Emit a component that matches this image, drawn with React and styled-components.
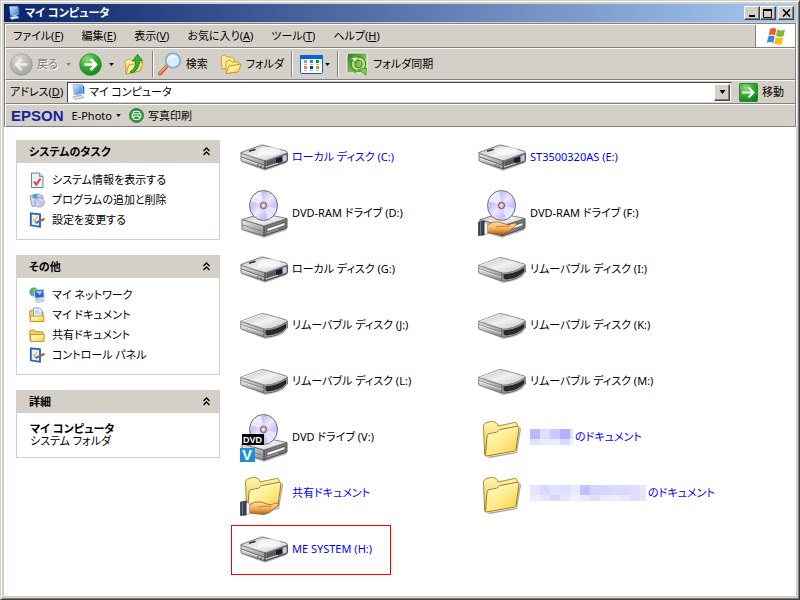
import React from "react";
import styled, { createGlobalStyle } from "styled-components";

const GlobalStyle = createGlobalStyle`
  * {
    box-sizing: border-box;
  }
  body {
    margin: 0;
    background: #fff;
    color: #000;
    font-family: "Noto Sans", "Noto Sans CJK JP", sans-serif;
    font-feature-settings: "palt";
    font-size: 11px;
    line-height: 16px;
  }
  button, input {
    font: inherit;
    font-feature-settings: inherit;
    color: inherit;
  }
  a {
    color: inherit;
    text-decoration: none;
  }
  svg {
    display: block;
    flex: none;
  }
`

const Window = styled.div`
  display: flex;
  flex-direction: column;
  min-height: 100vh;
  padding: 3px;
  background: #d4d0c8;
  border: 1px solid;
  border-color: #d4d0c8 #404040 #404040 #d4d0c8;
  box-shadow: inset 1px 1px 0 #fff, inset -1px -1px 0 #808080;
`

const TitleBar = styled.header`
  display: flex;
  align-items: center;
  gap: 4px;
  height: 18px;
  padding: 0 2px 0 3px;
  background: linear-gradient(90deg, #0a246a, #a6caf0);
`

const Title = styled.h1`
  flex: 1;
  margin: 0;
  color: #fff;
  font-size: 11px;
  font-weight: bold;
  line-height: 18px;
`

const Captions = styled.div`
  display: flex;
  button:last-child {
    margin-left: 2px;
  }
`

const CaptionButton = styled.button`
  display: grid;
  place-items: center;
  width: 16px;
  height: 14px;
  padding: 0;
  background: #d4d0c8;
  border: 1px solid;
  border-color: #fff #404040 #404040 #fff;
  box-shadow: inset -1px -1px 0 #808080;
`

const Bars = styled.div`
  margin-top: 1px;
  border: 1px solid #808080;
  border-bottom: 0;
  box-shadow: 1px 0 0 #fff;
`

const Bar = styled.div`
  display: flex;
  align-items: center;
  height: ${props => props.$height};
  border-top: 1px solid #fff;
  border-left: 1px solid #fff;
  border-bottom: 1px solid #808080;
  white-space: nowrap;
`

const MenuItems = styled.nav`
  display: flex;
  flex: 1;
  gap: 18px;
  padding-left: 7px;
`

const MenuButton = styled.button`
  padding: 0;
  background: none;
  border: 0;
`

const Brand = styled.div`
  display: grid;
  place-items: center;
  align-self: stretch;
  width: 40px;
  background: #fff;
  border-left: 1px solid #808080;
`

const ToolButton = styled.button`
  display: flex;
  align-items: center;
  gap: 4px;
  padding: 0;
  margin-left: ${props => props.$space || "4px"};
  background: none;
  border: 0;
  color: #000;
  &:disabled {
    color: #808080;
    text-shadow: 1px 1px 0 #fff;
  }
`

const Separator = styled.div`
  width: 2px;
  height: 26px;
  margin-left: 7px;
  background: #808080;
  border-right: 1px solid #fff;
`

const AddressLabel = styled.label`
  width: 61px;
  padding-left: 4px;
`

const AddressBox = styled.div`
  display: flex;
  align-items: center;
  flex: 1;
  height: 21px;
  padding: 1px 1px 1px 2px;
  background: #fff;
  border: 1px solid;
  border-color: #404040 #d4d0c8 #d4d0c8 #404040;
`

const AddressInput = styled.input`
  flex: 1;
  min-width: 0;
  height: 16px;
  margin-left: 3px;
  padding: 0;
  background: none;
  border: 0;
  outline: 0;
`

const DropButton = styled(CaptionButton)`
  height: 17px;
`

const GoButton = styled(ToolButton)`
  padding-right: 11px;
`

const Epson = styled.span`
  padding-left: 5px;
  color: #10279b;
  font-family: "Liberation Sans", sans-serif;
  font-size: 15px;
  font-weight: bold;
`

const Content = styled.div`
  display: flex;
  flex: 1;
  align-items: flex-start;
  gap: 20px;
  padding-left: 12px;
  background: #fff;
`

const Sidebar = styled.aside`
  display: flex;
  flex: none;
  flex-direction: column;
  gap: 15px;
  width: 204px;
  padding-top: 13px;
`

const PanelHeader = styled.button`
  display: flex;
  align-items: center;
  justify-content: space-between;
  width: 100%;
  height: 23px;
  padding: 0 10px 0 13px;
  background: #d4d0c8;
  border: 0;
  font-weight: bold;
`

const PanelBody = styled.div`
  padding: ${props => props.$padding || "7px 12px 9px"};
  border: 1px solid #d4d0c8;
  border-top: 0;
  line-height: 12px;
`

const TaskLink = styled.a`
  display: flex;
  align-items: center;
  gap: 7px;
  height: 20px;
`

const Detail = styled.div`
  font-weight: ${props => (props.$bold ? "bold" : "normal")};
`

const Tiles = styled.main`
  display: grid;
  flex: 1;
  grid-template-columns: repeat(auto-fill, 238px);
  padding-top: 2px;
`

const Tile = styled.a`
  position: relative;
  display: flex;
  align-items: center;
  gap: 4px;
  height: 56px;
  color: ${props => (props.$blue ? "#0000ff" : "#000")};
  white-space: nowrap;
`

const TileName = styled.span`
  display: flex;
  align-items: center;
  gap: 2px;
`

const Marker = styled.span`
  position: absolute;
  top: 4px;
  left: -9px;
  width: 160px;
  height: 50px;
  border: 1px solid #f00;
`

const HiddenDefs = styled.svg`
  position: absolute;
`

function Defs() {
  return (
    <HiddenDefs width="0" height="0" aria-hidden="true">
      <defs>
        <linearGradient id="metalTop" x1="0" y1="0" x2="1" y2="1">
          <stop offset="0" stopColor="#b4b4b4" />
          <stop offset="0.5" stopColor="#f2f2f2" />
          <stop offset="1" stopColor="#c2c2c2" />
        </linearGradient>
        <linearGradient id="metalSide" x1="0" y1="0" x2="1" y2="1">
          <stop offset="0" stopColor="#e8e8e8" />
          <stop offset="1" stopColor="#8c8c8c" />
        </linearGradient>
        <linearGradient id="folderBack" x1="0" y1="0" x2="0" y2="1">
          <stop offset="0" stopColor="#fff7b0" />
          <stop offset="1" stopColor="#e3b442" />
        </linearGradient>
        <linearGradient id="folderFront" x1="0" y1="0" x2="1" y2="1">
          <stop offset="0" stopColor="#fffbd0" />
          <stop offset="0.5" stopColor="#ffec8a" />
          <stop offset="1" stopColor="#f5c84e" />
        </linearGradient>
        <linearGradient id="disc" x1="0" y1="0" x2="1" y2="1">
          <stop offset="0" stopColor="#f4f4ff" />
          <stop offset="0.3" stopColor="#c2c4f6" />
          <stop offset="0.5" stopColor="#f3e6fb" />
          <stop offset="0.7" stopColor="#bfc3f8" />
          <stop offset="1" stopColor="#fafaff" />
        </linearGradient>
        <linearGradient id="skin" x1="0" y1="0" x2="0" y2="1">
          <stop offset="0" stopColor="#ffe0a8" />
          <stop offset="0.5" stopColor="#f9b564" />
          <stop offset="1" stopColor="#b4631c" />
        </linearGradient>
        <radialGradient id="green" cx="0.35" cy="0.25" r="0.8">
          <stop offset="0" stopColor="#8fe07c" />
          <stop offset="0.5" stopColor="#3bad33" />
          <stop offset="1" stopColor="#128018" />
        </radialGradient>
        <radialGradient id="grey" cx="0.35" cy="0.25" r="0.8">
          <stop offset="0" stopColor="#d8d8d8" />
          <stop offset="1" stopColor="#a2a29e" />
        </radialGradient>
        <linearGradient id="screen" x1="0" y1="0" x2="1" y2="1">
          <stop offset="0" stopColor="#d8f2ff" />
          <stop offset="1" stopColor="#2b78e0" />
        </linearGradient>
        <linearGradient id="sync" x1="0" y1="0" x2="1" y2="1">
          <stop offset="0" stopColor="#2f7d14" />
          <stop offset="1" stopColor="#c3e59a" />
        </linearGradient>
      </defs>
    </HiddenDefs>
  )
}

function HardDisk() {
  return (
    <svg width="48" height="48" viewBox="0 0 48 48">
      <path d="M2 29 25 38 47 30 44 28 25 35Z" fill="#000" opacity="0.25" />
      <path d="M1 19.5 25 27.5V36L2 28.5Q1 28 1 27Z" fill="url(#metalSide)" stroke="#555" strokeWidth="0.8" />
      <path d="M1.5 24 24.5 32.5" stroke="#555" strokeWidth="1" />
      <path d="M1.5 25 24.5 33.5" stroke="#fff" strokeWidth="0.7" />
      <path d="M25 27.5 47.5 20V27.5Q47.5 28.5 46 29L25 36Z" fill="#77777c" stroke="#3d3d40" strokeWidth="0.8" />
      <path d="M27 28.6 42 23.6V28.8L27 33.6Z" fill="#55555c" />
      <path d="M36 25.5 42 23.5V28.5L36 30.4Z" fill="#1b1b20" />
      <path d="M43 23 46.5 21.8V27.5L43 28.8Z" fill="#c3c3ee" />
      <path d="M26 34 38 30" stroke="#d8d8d8" strokeWidth="1" />
      <path d="M1 19.5 20.5 12.3Q22 11.8 24 12.3L46 18Q48 19 46.5 20.3L27 27.4Q25 28 23.5 27.3L2 20.7Z" fill="url(#metalTop)" stroke="#666" strokeWidth="0.8" />
      <ellipse cx="29" cy="18" rx="12" ry="4.3" fill="#fff" opacity="0.55" />
      <path d="M9 18.3 15.5 16.2" stroke="#333" strokeWidth="1.7" />
      <path d="M18 31.3V33.3M21 32.3V34.3" stroke="#555" strokeWidth="1" />
    </svg>
  )
}

function Removable() {
  return (
    <svg width="48" height="48" viewBox="0 0 48 48">
      <path d="M3 29 25 38Q40 36 46 30L40 29 25 34Z" fill="#000" opacity="0.25" />
      <path d="M.7 20.5 24 28V36L2 28.5Q.7 28 .7 27Z" fill="url(#metalSide)" stroke="#666" strokeWidth="0.8" />
      <path d="M1 23.5 24 31.7" stroke="#777" strokeWidth="0.9" />
      <path d="M1 24.4 24 32.7" stroke="#fff" strokeWidth="0.7" />
      <path d="M24 28Q37 27.5 47.4 20.5V27Q40 35 26 36.2Q24 36.4 24 35Z" fill="#a9a9a9" stroke="#555" strokeWidth="0.8" />
      <path d="M25.5 29.2Q37 28.6 46.2 22.4V26.8Q40 33.4 28 34.4Q25.5 34.6 25.5 33Z" fill="#29292c" />
      <path d="M.7 20.3 21 12.7Q22.5 12.2 24.5 12.7L46.5 19Q47.5 19.5 46.5 20.6Q37 27.4 25 28.2Z" fill="url(#metalTop)" stroke="#777" strokeWidth="0.8" />
      <path d="M2 20.5 22 13.4" stroke="#fff" strokeWidth="0.8" />
    </svg>
  )
}

function Hand() {
  return (
    <g>
      <path d="M9 36Q15 31.5 21 33Q27 35 31 36Q36 33 38.5 34.5Q39 36 35 39Q30 44.5 24 45.5Q15 45 9 43.5Z" fill="url(#skin)" stroke="#8c4a12" strokeWidth="0.7" />
      <path d="M18 38Q24 36.5 31 37.5" fill="none" stroke="#c77a2e" strokeWidth="0.9" />
      <path d="M.5 33 6.5 32V46L.5 46.5Z" fill="#3a3f49" stroke="#1e2128" strokeWidth="0.6" />
      <path d="M2.5 33V46" stroke="#777d89" strokeWidth="1" />
      <path d="M6.5 33.5 9.5 34.5V45L6.5 45.5Z" fill="#f4f4f8" stroke="#888" strokeWidth="0.5" />
    </g>
  )
}

function Optical({ hand, dvd }) {
  return (
    <svg width="48" height="48" viewBox="0 0 48 48" overflow="visible">
      <path d="M3 42 24 49 47 41 44 38 24 46Z" fill="#000" opacity="0.25" />
      <path d="M2 30.5 24 37V47L2 40.5Z" fill="url(#metalSide)" stroke="#555" strokeWidth="0.8" />
      <path d="M2 36 22 42" stroke="#777" strokeWidth="0.8" />
      <path d="M24 37 47 29.5V39L24 47Z" fill="#77777c" stroke="#3c3c3f" strokeWidth="0.8" />
      <path d="M27 39.5 45 33.5V36.5L27 42.8Z" fill="#f4f4f4" stroke="#333" strokeWidth="0.6" />
      <path d="M27 44 38 40.2" stroke="#aaa" strokeWidth="0.8" />
      <path d="M43 32.3H45" stroke="#26a82a" strokeWidth="1.6" />
      <path d="M2 30.5 22 24.5 47 29.5 24 37Z" fill="url(#metalTop)" stroke="#666" strokeWidth="0.8" />
      <ellipse cx="23.5" cy="16.5" rx="14" ry="15" fill="url(#disc)" stroke="#6e6e80" strokeWidth="1" />
      <path d="M23.5 16.5 11 12Q14 4 21 2.5Z" fill="#fff" opacity="0.65" />
      <path d="M23.5 16.5 36 19Q34 27 28 30Z" fill="#fff" opacity="0.55" />
      <ellipse cx="23.5" cy="16.5" rx="5" ry="5.3" fill="#eebfe8" opacity="0.8" />
      <ellipse cx="23.5" cy="16.5" rx="3" ry="3.2" fill="#b9b9c6" stroke="#555" strokeWidth="0.9" />
      <ellipse cx="23.5" cy="16.5" rx="1.1" ry="1.2" fill="#fff" />
      {hand && <Hand />}
      {dvd && (
        <g fontFamily="Liberation Sans, sans-serif" fontWeight="bold" fill="#fff">
          <rect x="2" y="21" width="22" height="11" fill="#000" />
          <text x="3" y="30" fontSize="9">DVD</text>
          <rect x="0" y="35" width="15" height="14" fill="#1d8fd2" />
          <text x="2" y="47" fontSize="15">V</text>
        </g>
      )}
    </svg>
  )
}

function Folder({ hand }) {
  return (
    <svg width="48" height="48" viewBox="0 0 48 48">
      <path d="M9 44 38 39 42 14 43 16 39 40 12 45Z" fill="#000" opacity="0.35" />
      <path d="M5.5 13Q5.5 11 7.5 10.2L12 8.5Q14 8 15.5 8.6L18.5 10Q19.5 10.6 20 13L36.5 9.5Q38.5 9.2 39 11L39.5 14 36 36 7.5 43Q6.5 42 6.5 40Z" fill="url(#folderBack)" stroke="#b08c28" strokeWidth="1" />
      <path d="M9 23Q9.2 21.2 11 20.8L18 19.4Q19.5 19 20.3 17.7Q21 16.8 22.5 16.5L39.5 13.2Q41 13 41 14.8L38 36.5Q37.8 37.8 36.5 38.1L9 43Q7.5 43.2 7.6 41.5Z" fill="url(#folderFront)" stroke="#a07a18" strokeWidth="1" />
      <path d="M10.2 23.5Q10.4 22 12 21.7L18.5 20.4Q20.3 20 21.3 18.4L39.5 14.6" fill="none" stroke="#fffde6" strokeWidth="0.9" />
      {hand && <Hand />}
    </svg>
  )
}

function Monitor({ size = 16 }) {
  return (
    <svg width={size} height={size} viewBox="0 0 16 16">
      <path d="M3 .8 11.7.2Q12.3.2 12.4.8L13 9.5 4.3 10.7Z" fill="url(#screen)" stroke="#9eb3cf" strokeWidth="0.9" />
      <path d="M6 10.7 11 10 11.5 12 6.5 12.7Z" fill="#b8c3d8" />
      <path d="M3 12.7 12 11.5 14 13.7 5 15.4Z" fill="#dfe6f3" stroke="#7b8fb3" strokeWidth="0.6" />
      <path d="M12.8 1.6 14.3 2.6V10L13.2 9.8Z" fill="#3a66b4" />
    </svg>
  )
}

function Arrow({ back, disabled }) {
  return (
    <svg width="23" height="23" viewBox="0 0 23 23">
      <circle cx="11.5" cy="11.5" r="10.8" fill={disabled ? "url(#grey)" : "url(#green)"} stroke={disabled ? "#9b9b97" : "#2b8a2c"} strokeWidth="0.8" />
      <path
        d={back ? "M17.5 11.5H6.5M11.5 6 6 11.5 11.5 17" : "M5.5 11.5H16.5M11.5 6 17 11.5 11.5 17"}
        fill="none" stroke={disabled ? "#eee" : "#fff"} strokeWidth="2.6"
      />
    </svg>
  )
}

function Caret({ color = "#000", width = 5 }) {
  return (
    <svg width={width} height={(width + 1) / 2} viewBox="0 0 6 4"><path d="M0 0H6L3 4Z" fill={color} /></svg>
  )
}

function FolderUp() {
  return (
    <svg width="21" height="22" viewBox="0 0 21 22">
      <path d="M1 8 6 6 8 8 18 7 16 18 2 21Z" fill="url(#folderBack)" stroke="#c79c2d" strokeWidth="0.8" />
      <path d="M2 21 5 12 19 9.5 16 18Z" fill="url(#folderFront)" stroke="#bd8e1f" strokeWidth="0.8" />
      <path d="M6 19Q12 16 11.5 8H8.5L13.5 1.5 18.5 7.5 15.5 8Q15.5 16.5 8 20Z" fill="#35b135" stroke="#167a1b" strokeWidth="0.8" />
    </svg>
  )
}

function Search() {
  return (
    <svg width="24" height="24" viewBox="0 0 24 24">
      <path d="M8.5 14.5 2 21.5" stroke="#a4521f" strokeWidth="3.6" strokeLinecap="round" />
      <path d="M8.5 14 2 21" stroke="#f2a163" strokeWidth="2" strokeLinecap="round" />
      <circle cx="15" cy="8.5" r="7.3" fill="#d6efff" stroke="#7fa3dc" strokeWidth="1.6" />
      <path d="M10 8Q11 4 15 3.5Q18 3.5 19 5Q13 5 10 8Z" fill="#fff" />
    </svg>
  )
}

function Folders() {
  return (
    <svg width="22" height="22" viewBox="0 0 22 22">
      <path d="M1 3.5 5 2 7 4H13L14 6V14L2 16Z" fill="#ffec96" stroke="#cc9a2b" strokeWidth="0.9" />
      <path d="M6 8.5 10 7 12 9H18L19 11 17 19 6 20.5Z" fill="#ffe891" stroke="#cc9a2b" strokeWidth="0.9" />
      <path d="M6 20.5 9 13 21.3 11 18 19Z" fill="url(#folderFront)" stroke="#c18e23" strokeWidth="0.9" />
    </svg>
  )
}

function Views() {
  const dots = ["#9c9cc8", "#1c8ae6", "#07941a", "#ff7b43", "#0b3698", "#cfa000"]
  return (
    <svg width="23" height="19" viewBox="0 0 23 19">
      <rect x="0.5" y="0.5" width="22" height="18" rx="1" fill="#fff" stroke="#1064d2" />
      <rect x="0" y="0" width="23" height="4" rx="1" fill="#0a63d6" />
      {dots.map((dot, i) => (
        <g key={dot}>
          <rect x={4 + (i % 3) * 6} y={i < 3 ? 5 : 11} width="3" height="3" fill={dot} />
          <path d={`M${4 + (i % 3) * 6} ${i < 3 ? 9.5 : 15.5}h3`} stroke="#bbb" strokeWidth="1" />
        </g>
      ))}
    </svg>
  )
}

function Sync() {
  return (
    <svg width="23" height="24" viewBox="0 0 23 24">
      <path d="M4 1H21V21H1V4Q1 1 4 1Z" fill="url(#sync)" stroke="#e9f6df" strokeWidth="1" />
      <path d="M5 7 9.5 4.5 20 8 19 12 15 11Q13 7.5 9.5 10Z" fill="#e6f4d2" />
      <circle cx="12.5" cy="12" r="5.4" fill="none" stroke="#35820f" strokeWidth="4.6" />
      <circle cx="12.5" cy="12" r="5.4" fill="none" stroke="#b4df84" strokeWidth="2.8" />
      <path d="M5 5.5 13.5 5 8.5 10.5Z" fill="#d9f0bd" stroke="#35820f" strokeWidth="0.7" />
      <path d="M12 17.5 20.5 16 20 23Z" fill="#8cc654" stroke="#35820f" strokeWidth="0.7" />
      <path d="M4 12.5 8.5 17 11 22Q4.5 20 4 12.5Z" fill="#62a82f" opacity="0.7" />
    </svg>
  )
}

function WindowsLogo() {
  return (
    <svg width="20" height="19" viewBox="0 0 20 19">
      <path d="M4 2Q7 0 10.3 2L9 8.5Q6 6.7 2.6 8.5Z" fill="#ee5a24" />
      <path d="M11.3 2.4Q15 4.5 19 2.6L17.5 9.3Q13.5 10.8 10 8.8Z" fill="#7cbf2a" />
      <path d="M2.3 9.5Q5.5 7.7 8.7 9.5L7.3 16Q4 14.2.8 16Z" fill="#3e86dc" />
      <path d="M9.7 10Q13.3 12 17.2 10.4L15.8 17Q12 18.7 8.3 16.6Z" fill="#fbbd15" />
    </svg>
  )
}

function Print() {
  return (
    <svg width="15" height="15" viewBox="0 0 15 15">
      <circle cx="7.5" cy="7.5" r="7" fill="#2e9a3c" stroke="#1c7a2c" strokeWidth="0.8" />
      <path d="M4.5 5.5V3.5H10.5V5.5M4.5 9.5H3.2V5.8H11.8V9.5H10.5M4.8 8H10.2V11.5H4.8Z" fill="none" stroke="#fff" strokeWidth="1" />
    </svg>
  )
}

function GoIcon() {
  return (
    <svg width="19" height="19" viewBox="0 0 19 19">
      <rect x="0.5" y="0.5" width="18" height="18" rx="1" fill="url(#green)" stroke="#2d8a35" />
      <path d="M3 9.5H14M9.5 4.5 14.5 9.5 9.5 14.5" fill="none" stroke="#fff" strokeWidth="2" />
    </svg>
  )
}

function Chevrons() {
  return (
    <svg width="7" height="9" viewBox="0 0 7 9">
      <path d="M.5 4 3.5 1 6.5 4M.5 8 3.5 5 6.5 8" fill="none" stroke="#000" strokeWidth="1.3" />
    </svg>
  )
}

function SheetCheck() {
  return (
    <svg width="16" height="16" viewBox="0 0 16 16">
      <path d="M2.5 1H10.5L14 4.5V15.5H2.5Z" fill="#e6effc" stroke="#6283bf" />
      <path d="M10.5 1V4.5H14" fill="#b8cdf0" stroke="#6283bf" strokeWidth="0.8" />
      <path d="M5 9.5 7.3 12.5 11.5 6.5" fill="none" stroke="#e84316" strokeWidth="2" />
    </svg>
  )
}

function Programs() {
  return (
    <svg width="16" height="16" viewBox="0 0 16 16">
      <path d="M1 4 9 2 14 4 13 13 3 14.5Z" fill="#c9dcf3" stroke="#7690bd" strokeWidth="0.8" />
      <path d="M3 3 8 1.5 9 6 4 6.5Z" fill="#5b94df" />
      <path d="M5 2.5H6.5V6H5Z" fill="#4db04d" />
      <circle cx="10.5" cy="10.3" r="4.7" fill="url(#disc)" stroke="#8088b8" strokeWidth="0.8" />
      <circle cx="10.5" cy="10.3" r="1.3" fill="#fff" stroke="#8088b8" strokeWidth="0.7" />
    </svg>
  )
}

function Settings() {
  return (
    <svg width="16" height="16" viewBox="0 0 16 16">
      <path d="M1.8 1.3 11 2.3V14.8L1.8 13.3Z" fill="#e9f3ff" stroke="#1e61b8" strokeWidth="1.8" />
      <path d="M4 7 5.5 9.5 8.5 4.5" fill="none" stroke="#e8b14c" strokeWidth="1.2" />
      <path d="M6.5 11 12 8.5" stroke="#4176b8" strokeWidth="2" />
      <path d="M11.8 8.5 14.5 7.3" stroke="#c95533" strokeWidth="2.4" strokeLinecap="round" />
    </svg>
  )
}

function Network() {
  return (
    <svg width="16" height="16" viewBox="0 0 16 16">
      <circle cx="5" cy="5" r="4.6" fill="#4aa6e4" />
      <path d="M1 3Q4 0 7 1L6 4 3 7 1 6Z" fill="#58b64b" />
      <path d="M5 3.2 14.7 2.3 15.2 10.5 6.2 11.4Z" fill="#2c64cf" stroke="#c2cde0" strokeWidth="1" />
      <path d="M6.5 4.5 13.5 3.8 11 8Z" fill="#9fd2fb" />
      <path d="M6 13 14 12 15 14 8 15.5Z" fill="#dbe3f1" stroke="#8497b7" strokeWidth="0.6" />
    </svg>
  )
}

function SmallFolder({ doc }) {
  return (
    <svg width="16" height="16" viewBox="0 0 16 16">
      <path d="M.6 5Q.6 3.5 2 3.2L5 3 6.5 4.5 14 5V14H1.2Z" fill="#f3cf62" stroke="#bd8f25" strokeWidth="0.9" />
      {doc && <path d="M4.5 1H10.5L13 3.5V11H4.5Z" fill="#eef5ff" stroke="#6f98d0" strokeWidth="0.9" />}
      {doc && <path d="M6 4H10M6 6H11.5" stroke="#7fb2ea" strokeWidth="0.9" />}
      <path d={doc ? "M1.5 9H14.8V14.6H1.5Z" : "M1.5 7.5H15.3L14.8 14.6H1.8Z"} fill="url(#folderFront)" stroke="#bd8f25" strokeWidth="0.9" />
    </svg>
  )
}

// blocky censor strip, ten pixels per cell
function Mosaic({ width, rows }) {
  return (
    <svg width={width} height="16" viewBox={`0 0 ${width} 16`}>
      {rows.map((row, y) =>
        row.map((fill, x) => (
          <rect key={`${x}-${y}`} x={x * 10} y={y * 10} width="10" height="10" fill={fill} />
        ))
      )}
    </svg>
  )
}

const shortMosaic = [
  ["#b9b9ff", "#dedeff", "#cacaff", "#b0b0ff", "#e0e0ff"],
  ["#e0e0ff", "#e9e9ff", "#eeeeff", "#dadaff", "#f2f2ff"],
]

const longMosaic = [
  ["#e4e4ff", "#d9d9ff", "#e2e2ff", "#dedeff", "#e8e8ff", "#c0c0ff", "#d4d4ff", "#d6d6ff", "#dadaff", "#dadaff", "#dedeff", "#e6e6ff"],
  ["#ececff", "#e6e6ff", "#d8d8ff", "#e4e4ff", "#f2f2ff", "#e8e8ff", "#dedeff", "#eaeaff", "#eeeeff", "#e8e8ff", "#dedeff", "#e4e4ff"],
]

const menus = [
  ["ファイル", "F"],
  ["編集", "E"],
  ["表示", "V"],
  ["お気に入り", "A"],
  ["ツール", "T"],
  ["ヘルプ", "H"],
]

const systemTasks = [
  { name: "システム情報を表示する", icon: <SheetCheck /> },
  { name: "プログラムの追加と削除", icon: <Programs /> },
  { name: "設定を変更する", icon: <Settings /> },
]

const otherPlaces = [
  { name: "マイ ネットワーク", icon: <Network /> },
  { name: "マイ ドキュメント", icon: <SmallFolder doc /> },
  { name: "共有ドキュメント", icon: <SmallFolder /> },
  { name: "コントロール パネル", icon: <Settings /> },
]

const tiles = [
  { name: "ローカル ディスク (C:)", icon: <HardDisk />, blue: true },
  { name: "ST3500320AS (E:)", icon: <HardDisk />, blue: true },
  { name: "DVD-RAM ドライブ (D:)", icon: <Optical /> },
  { name: "DVD-RAM ドライブ (F:)", icon: <Optical hand /> },
  { name: "ローカル ディスク (G:)", icon: <HardDisk /> },
  { name: "リムーバブル ディスク (I:)", icon: <Removable /> },
  { name: "リムーバブル ディスク (J:)", icon: <Removable /> },
  { name: "リムーバブル ディスク (K:)", icon: <Removable /> },
  { name: "リムーバブル ディスク (L:)", icon: <Removable /> },
  { name: "リムーバブル ディスク (M:)", icon: <Removable /> },
  { name: "DVD ドライブ (V:)", icon: <Optical dvd /> },
  { name: "のドキュメント", icon: <Folder />, blue: true, mosaic: <Mosaic width={43} rows={shortMosaic} /> },
  { name: "共有ドキュメント", icon: <Folder hand />, blue: true },
  { name: "のドキュメント", icon: <Folder />, blue: true, mosaic: <Mosaic width={116} rows={longMosaic} /> },
  { name: "ME SYSTEM (H:)", icon: <HardDisk />, blue: true, marked: true },
]

function Panel({ title, padding, children }) {
  return (
    <section>
      <PanelHeader>{title}<Chevrons /></PanelHeader>
      <PanelBody $padding={padding}>{children}</PanelBody>
    </section>
  )
}

export default function App() {
  return (
    <Window>
      <GlobalStyle />
      <Defs />
      <TitleBar>
        <Monitor size={14} />
        <Title>マイ コンピュータ</Title>
        <Captions>
          <CaptionButton aria-label="最小化">
            <svg width="10" height="9"><path d="M2 7H8" stroke="#000" strokeWidth="2" /></svg>
          </CaptionButton>
          <CaptionButton aria-label="最大化">
            <svg width="10" height="9"><path d="M.5 1H8.5M.5 0V8.5H8.5V0" fill="none" stroke="#000" /><path d="M0 1H9" stroke="#000" strokeWidth="2" /></svg>
          </CaptionButton>
          <CaptionButton aria-label="閉じる">
            <svg width="9" height="8"><path d="M1 .5 8 7.5M8 .5 1 7.5" stroke="#000" strokeWidth="1.6" /></svg>
          </CaptionButton>
        </Captions>
      </TitleBar>
      <Bars>
        <Bar $height="24px">
          <MenuItems>
            {menus.map(([name, key]) => (
              <MenuButton key={key}>{name}(<u>{key}</u>)</MenuButton>
            ))}
          </MenuItems>
          <Brand><WindowsLogo /></Brand>
        </Bar>
        <Bar $height="32px">
          <ToolButton disabled><Arrow back disabled />戻る</ToolButton>
          <ToolButton $space="8px" disabled aria-label="戻る履歴"><Caret color="#808080" /></ToolButton>
          <ToolButton $space="8px" aria-label="進む"><Arrow /></ToolButton>
          <ToolButton $space="7px" aria-label="進む履歴"><Caret /></ToolButton>
          <ToolButton $space="10px" aria-label="上へ"><FolderUp /></ToolButton>
          <Separator />
          <ToolButton><Search />検索</ToolButton>
          <ToolButton $space="12px"><Folders />フォルダ</ToolButton>
          <Separator />
          <ToolButton $space="7px" aria-label="表示"><Views /></ToolButton>
          <ToolButton $space="2px" aria-label="表示の選択"><Caret /></ToolButton>
          <Separator />
          <ToolButton $space="7px"><Sync />フォルダ同期</ToolButton>
        </Bar>
        <Bar $height="24px">
          <AddressLabel htmlFor="address">アドレス(<u>D</u>)</AddressLabel>
          <AddressBox>
            <Monitor />
            <AddressInput id="address" defaultValue="マイ コンピュータ" />
            <DropButton aria-label="アドレス一覧"><Caret width={7} /></DropButton>
          </AddressBox>
          <GoButton $space="7px"><GoIcon />移動</GoButton>
        </Bar>
        <Bar $height="23px">
          <Epson>EPSON</Epson>
          <ToolButton $space="8px">E-Photo<Caret /></ToolButton>
          <ToolButton $space="8px"><Print />写真印刷</ToolButton>
        </Bar>
      </Bars>
      <Content>
        <Sidebar>
          <Panel title="システムのタスク">
            {systemTasks.map(task => (
              <TaskLink key={task.name} href="#">{task.icon}{task.name}</TaskLink>
            ))}
          </Panel>
          <Panel title="その他">
            {otherPlaces.map(place => (
              <TaskLink key={place.name} href="#">{place.icon}{place.name}</TaskLink>
            ))}
          </Panel>
          <Panel title="詳細" padding="10px 13px">
            <Detail $bold>マイ コンピュータ</Detail>
            <Detail>システム フォルダ</Detail>
          </Panel>
        </Sidebar>
        <Tiles>
          {tiles.map((tile, i) => (
            <Tile key={i} href="#" $blue={tile.blue}>
              {tile.icon}
              <TileName>{tile.mosaic}{tile.name}</TileName>
              {tile.marked && <Marker />}
            </Tile>
          ))}
        </Tiles>
      </Content>
    </Window>
  )
}
